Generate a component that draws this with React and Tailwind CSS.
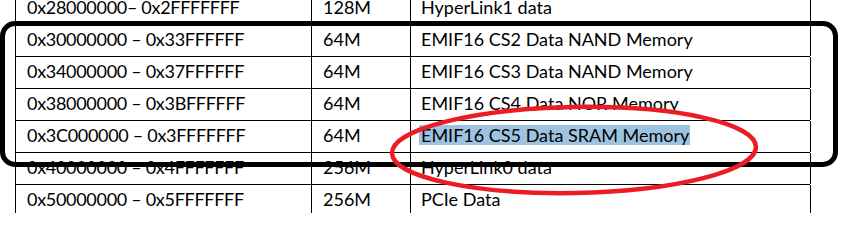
import React from "react";

const rows = [
  ["0x28000000– 0x2FFFFFFF", "128M", "HyperLink1 data"],
  ["0x30000000 – 0x33FFFFFF", "64M", "EMIF16 CS2 Data NAND Memory"],
  ["0x34000000 – 0x37FFFFFF", "64M", "EMIF16 CS3 Data NAND Memory"],
  ["0x38000000 – 0x3BFFFFFF", "64M", "EMIF16 CS4 Data NOR Memory"],
  ["0x3C000000 – 0x3FFFFFFF", "64M", "EMIF16 CS5 Data SRAM Memory", true],
  ["0x40000000 – 0x4FFFFFFF", "256M", "HyperLink0 data"],
  ["0x50000000 – 0x5FFFFFFF", "256M", "PCIe Data"],
];

export default function App() {
  return (
    <div
      className="relative w-[847px] h-[243px] overflow-hidden bg-white text-black"
      style={{ fontFamily: "Lato, 'Open Sans', sans-serif" }}
    >
      <div className="ml-[15px] -mt-[7px] w-[795px] text-[18px]">
        {rows.map(([a, b, c, hl], i) => (
          <div
            key={i}
            className={
              "grid grid-cols-[296px_99px_400px] border-l border-black " +
              (i === rows.length - 1 ? "h-[28px]" : "h-[32px] border-b")
            }
          >
            <div className="border-r border-black pl-[11px] flex items-start pt-[3px] leading-[22px] whitespace-nowrap tracking-[-0.3px]">
              {a}
            </div>
            <div className="border-r border-black pl-[11px] flex items-start pt-[3px] leading-[22px] whitespace-nowrap">
              {b}
            </div>
            <div className="border-r border-black pl-[8px] flex items-start pt-[3px] leading-[22px] whitespace-nowrap">
              {hl ? (
                <span className="inline-block bg-[#9dc3e0] h-[20px] leading-[20px] mt-[1px] pl-[2px] pr-[1px]">
                  {c}
                </span>
              ) : (
                <span className="pl-[2px]">{c}</span>
              )}
            </div>
          </div>
        ))}
      </div>

      <div className="absolute left-0 top-[21px] w-[838px] h-[146px] border-[5px] border-black rounded-[15px] pointer-events-none" />

      <svg
        className="absolute left-0 top-0 pointer-events-none"
        width="847"
        height="243"
        viewBox="0 0 847 243"
      >
        <ellipse
          cx="574"
          cy="150"
          rx="182"
          ry="43"
          fill="none"
          stroke="#ec1c24"
          strokeWidth="4.5"
          transform="rotate(-1 574 150)"
        />
      </svg>
    </div>
  );
}
